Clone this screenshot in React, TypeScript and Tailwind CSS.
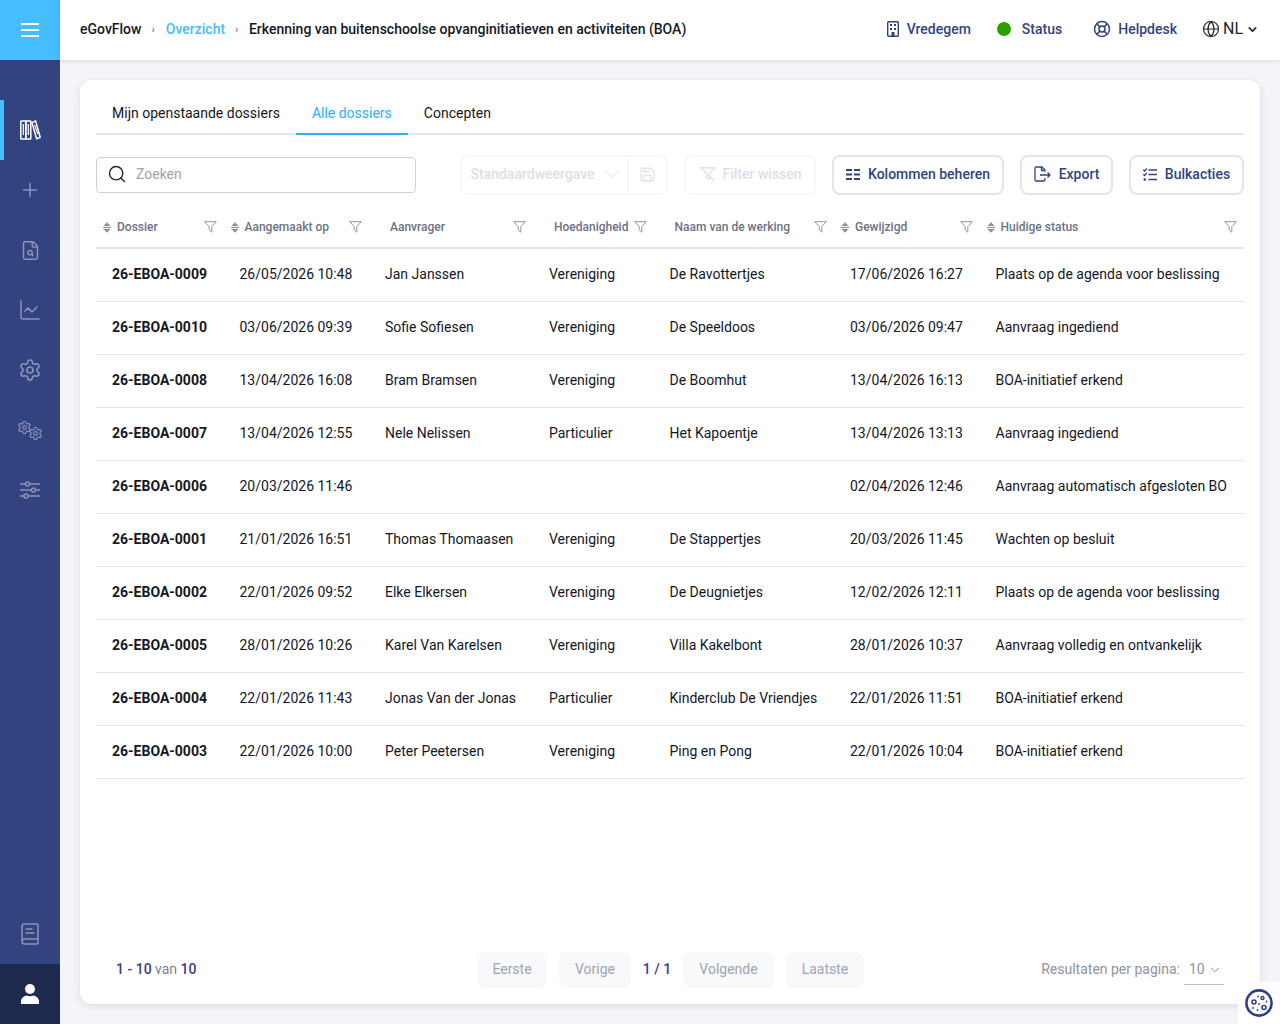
import {
  BookText,
  ChartLine,
  ChevronDown,
  FileSearch,
  Globe,
  LifeBuoy,
  Plus,
  Save,
  Search,
  Settings,
} from "lucide-react";

const rows = [
  ["26-EBOA-0009", "26/05/2026 10:48", "Jan Janssen", "Vereniging", "De Ravottertjes", "17/06/2026 16:27", "Plaats op de agenda voor beslissing"],
  ["26-EBOA-0010", "03/06/2026 09:39", "Sofie Sofiesen", "Vereniging", "De Speeldoos", "03/06/2026 09:47", "Aanvraag ingediend"],
  ["26-EBOA-0008", "13/04/2026 16:08", "Bram Bramsen", "Vereniging", "De Boomhut", "13/04/2026 16:13", "BOA-initiatief erkend"],
  ["26-EBOA-0007", "13/04/2026 12:55", "Nele Nelissen", "Particulier", "Het Kapoentje", "13/04/2026 13:13", "Aanvraag ingediend"],
  ["26-EBOA-0006", "20/03/2026 11:46", "", "", "", "02/04/2026 12:46", "Aanvraag automatisch afgesloten BO"],
  ["26-EBOA-0001", "21/01/2026 16:51", "Thomas Thomaasen", "Vereniging", "De Stappertjes", "20/03/2026 11:45", "Wachten op besluit"],
  ["26-EBOA-0002", "22/01/2026 09:52", "Elke Elkersen", "Vereniging", "De Deugnietjes", "12/02/2026 12:11", "Plaats op de agenda voor beslissing"],
  ["26-EBOA-0005", "28/01/2026 10:26", "Karel Van Karelsen", "Vereniging", "Villa Kakelbont", "28/01/2026 10:37", "Aanvraag volledig en ontvankelijk"],
  ["26-EBOA-0004", "22/01/2026 11:43", "Jonas Van der Jonas", "Particulier", "Kinderclub De Vriendjes", "22/01/2026 11:51", "BOA-initiatief erkend"],
  ["26-EBOA-0003", "22/01/2026 10:00", "Peter Peetersen", "Vereniging", "Ping en Pong", "22/01/2026 10:04", "BOA-initiatief erkend"],
];

const columns = [
  { label: "Dossier", sort: true, width: "w-[127.5px]" },
  { label: "Aangemaakt op", sort: true, width: "w-[145.5px]" },
  { label: "Aanvrager", sort: false, width: "w-[164px]" },
  { label: "Hoedanigheid", sort: false, width: "w-[120.5px]" },
  { label: "Naam van de werking", sort: false, width: "w-[180.5px]" },
  { label: "Gewijzigd", sort: true, width: "w-[145.5px]" },
  { label: "Huidige status", sort: true, width: "" },
];

function SortIcon() {
  return (
    <svg width="8" height="11" viewBox="0 0 8 11" className="shrink-0 text-[#8a8f9b]" fill="currentColor">
      <path d="M4 0.3 7.6 4H0.4Z" />
      <rect x="0" y="5" width="8" height="1" />
      <path d="M4 10.7 7.6 7H0.4Z" />
    </svg>
  );
}

function FunnelIcon() {
  return (
    <svg width="13" height="12" viewBox="0 0 13 12" fill="none" stroke="#8f94a0" strokeWidth="1" className="shrink-0">
      <path d="M0.7 0.7H12.3L7.8 5.6V11.2L5.2 8.8V5.6Z" strokeLinejoin="round" />
    </svg>
  );
}

function BooksIcon() {
  return (
    <svg width="21" height="20" viewBox="0 0 21 20" fill="none" stroke="white" strokeWidth="1.5" strokeLinejoin="round">
      <rect x="0.8" y="1" width="5" height="18" rx="0.6" />
      <rect x="5.8" y="1" width="5" height="18" rx="0.6" />
      <path d="M3.3 4V15M8.3 4V15" strokeWidth="1.2" />
      <path d="M12 2.6 15.6 0.9 20.2 17.2 16.6 18.9Z" />
      <path d="M14.6 5 17.8 14" strokeWidth="1.1" />
    </svg>
  );
}

function SlidersIcon() {
  return (
    <svg width="20" height="18" viewBox="0 0 20 18" fill="none" stroke="currentColor" strokeWidth="1.5">
      <path d="M0 3H5.5M9.5 3H20M0 9H11.5M15.5 9H20M0 15H4M8 15H20" />
      <circle cx="7.5" cy="3" r="2" />
      <circle cx="13.5" cy="9" r="2" />
      <circle cx="6" cy="15" r="2" />
    </svg>
  );
}

function UserIcon() {
  return (
    <svg width="18" height="20" viewBox="0 0 18 20" fill="white">
      <circle cx="9" cy="5" r="5" />
      <path d="M0 20V17.5C0 14 3 11.8 5.5 11.4 7.5 12.4 10.5 12.4 12.5 11.4 15 11.8 18 14 18 17.5V20Z" />
    </svg>
  );
}

function BuildingIcon() {
  return (
    <svg width="12" height="16" viewBox="0 0 12 16" fill="none" stroke="#33437f" strokeWidth="1.4" className="mr-[8px]">
      <rect x="0.7" y="0.7" width="10.6" height="14.6" rx="1" />
      <g fill="#33437f" stroke="none">
        <rect x="3" y="3" width="2" height="2" />
        <rect x="7" y="3" width="2" height="2" />
        <rect x="3" y="7" width="2" height="2" />
        <rect x="7" y="7" width="2" height="2" />
        <rect x="4.5" y="11" width="3" height="4.5" />
      </g>
    </svg>
  );
}

function ChevronThin() {
  return (
    <svg width="15" height="8" viewBox="0 0 15 8" fill="none" stroke="currentColor" strokeWidth="1">
      <path d="M0.5 0.5 7.5 7 14.5 0.5" />
    </svg>
  );
}

function FilterClearIcon() {
  return (
    <svg width="18" height="14" viewBox="0 0 18 14" fill="none" stroke="currentColor" strokeWidth="1.2" strokeLinejoin="round">
      <path d="M0.8 0.8H17.2L11.5 6.5V12.5L8 10V8" />
      <path d="M3 0.8 8 6M5 3 16 13.5" />
    </svg>
  );
}

function ColumnsIcon() {
  return (
    <svg width="14" height="13" viewBox="0 0 14 13" fill="none" stroke="#33437f" strokeWidth="2">
      <path d="M0 2H6M0 6.5H6M0 11H6M8 2H14M8 6.5H14M8 11H14" />
    </svg>
  );
}

function ExportIcon() {
  return (
    <svg width="17" height="16" viewBox="0 0 17 16" fill="none" stroke="#33437f" strokeWidth="1.3" strokeLinejoin="round">
      <path d="M11 5.5V4L8 1H2.2C1.5 1 1 1.5 1 2.2V13.8C1 14.5 1.5 15 2.2 15H9.8C10.5 15 11 14.5 11 13.8V12" />
      <path d="M7.5 1V4.5H11" />
      <path d="M6 9H16M13.5 6.5 16 9 13.5 11.5" />
    </svg>
  );
}

function BulkIcon() {
  return (
    <svg width="14" height="13" viewBox="0 0 14 13" fill="none" stroke="#33437f" strokeWidth="1.3">
      <path d="M0.3 1.8 1.6 3 3.8 0.5M0.3 6.3 1.6 7.5 3.8 5" />
      <circle cx="1.8" cy="11.5" r="0.7" fill="#33437f" />
      <path d="M5.5 2H14M5.5 6.5H14M5.5 11.5H14" strokeWidth="1.5" />
    </svg>
  );
}

function CookieIcon() {
  return (
    <svg width="28" height="28" viewBox="0 0 28 28" fill="none" stroke="#2d3f86">
      <circle cx="14" cy="14" r="12.6" strokeWidth="2.6" />
      <circle cx="9" cy="13" r="2" strokeWidth="1.6" />
      <circle cx="17.5" cy="9" r="1.5" strokeWidth="1.4" />
      <circle cx="19" cy="18.5" r="2" strokeWidth="1.6" />
      <g fill="#2d3f86" stroke="none">
        <circle cx="13" cy="7.5" r="0.9" />
        <circle cx="14" cy="15" r="0.9" />
        <circle cx="8" cy="19" r="0.9" />
        <circle cx="12.5" cy="21" r="0.9" />
        <circle cx="21.5" cy="12.5" r="0.9" />
      </g>
    </svg>
  );
}

function SidebarItem({ children }: { children: React.ReactNode }) {
  return <div className="h-[60px] flex items-center justify-center text-[#8b95b9]">{children}</div>;
}

export default function App() {
  return (
    <div className="flex h-[1024px] overflow-hidden bg-[#f3f5f9] text-sm leading-[21px] text-[#14171f] font-['Roboto',sans-serif] relative">
      <aside className="w-[60px] shrink-0 bg-[#33437f] flex flex-col">
        <div className="h-[60px] bg-[#46bdff] flex flex-col items-center justify-center gap-[4px]">
          <span className="block w-[18px] h-[2px] bg-white" />
          <span className="block w-[18px] h-[2px] bg-white" />
          <span className="block w-[18px] h-[2px] bg-white" />
        </div>
        <div className="mt-10 flex flex-col">
          <div className="h-[60px] flex items-center justify-center border-l-4 border-[#46bdff] pr-1">
            <BooksIcon />
          </div>
          <SidebarItem><Plus size={22} strokeWidth={1.6} /></SidebarItem>
          <SidebarItem><FileSearch size={21} strokeWidth={1.7} /></SidebarItem>
          <SidebarItem><ChartLine size={24} strokeWidth={1.5} /></SidebarItem>
          <SidebarItem><Settings size={24} strokeWidth={1.6} /></SidebarItem>
          <SidebarItem>
            <div className="relative w-[26px] h-[21px] -ml-[1px]">
              <Settings size={15} strokeWidth={1.8} className="absolute left-0 top-0" />
              <Settings size={15} strokeWidth={1.8} className="absolute right-0 bottom-0" />
            </div>
          </SidebarItem>
          <SidebarItem><SlidersIcon /></SidebarItem>
        </div>
        <div className="mt-auto">
          <SidebarItem><BookText size={24} strokeWidth={1.5} /></SidebarItem>
          <div className="h-[60px] bg-[#1f2a4f] flex items-center justify-center">
            <UserIcon />
          </div>
        </div>
      </aside>

      <div className="flex-1 min-w-0 flex flex-col">
        <header className="h-[60px] shrink-0 bg-white shadow-[0_1px_4px_rgba(30,40,70,0.14)] pl-5 pr-[21px] pb-[2px] flex items-center justify-between font-medium">
          <div className="flex items-center">
            <span>eGovFlow</span>
            <span className="ml-[10px] mr-[11px] text-[11px] text-[#6b7280]">›</span>
            <span className="text-[#46bdff]">Overzicht</span>
            <span className="ml-[10px] mr-[10.5px] text-[11px] text-[#6b7280]">›</span>
            <span>Erkenning van buitenschoolse opvanginitiatieven en activiteiten (BOA)</span>
          </div>
          <div className="flex items-center text-[#33437f]">
            <BuildingIcon />
            <span>Vredegem</span>
            <span className="ml-[26px] mr-[11px] w-[14px] h-[14px] rounded-full bg-[#2ca002]" />
            <span>Status</span>
            <LifeBuoy size={18} strokeWidth={2} className="ml-[31px] mr-[7px]" />
            <span>Helpdesk</span>
            <Globe size={18} strokeWidth={1.6} className="ml-[25px] mr-[3px] text-[#22252c]" />
            <span className="text-base font-normal text-[#22252c]">NL</span>
            <ChevronDown size={13} strokeWidth={3} className="ml-[3px] text-[#22252c]" />
          </div>
        </header>

        <main className="flex-1 min-h-0 pt-5 pl-5 pr-5 pb-5">
          <div className="h-full bg-white rounded-xl shadow-[0_2px_8px_rgba(30,40,70,0.12)] px-4 pt-[12px] flex flex-col">
            <nav className="flex h-[43px] border-b-2 border-[#e4e5ec]">
              <div className="px-4 h-[43px] pt-[1px] flex items-center border-b-2 border-transparent">Mijn openstaande dossiers</div>
              <div className="px-4 h-[43px] pt-[1px] flex items-center text-[#2cb0f7] border-b-2 border-[#2cb0f7]">Alle dossiers</div>
              <div className="px-4 h-[43px] pt-[1px] flex items-center border-b-2 border-transparent">Concepten</div>
            </nav>

            <div className="mt-[20px] flex items-center h-10">
              <div className="w-[320px] h-9 border border-[#cdd0d8] rounded flex items-center pl-[10px] pb-[2px]">
                <Search size={20} strokeWidth={1.7} className="text-[#22252c]" />
                <span className="ml-[9px] text-[#9ea3ad]">Zoeken</span>
              </div>
              <div className="ml-[44px] w-[208px] h-10 border-2 border-[#f7f7fa] rounded-lg flex items-center text-[#dcdeea] font-medium pb-[2px]">
                <span className="pl-[8.5px]">Standaardweergave</span>
                <span className="ml-[9px]"><ChevronThin /></span>
                <span className="ml-[8px] h-9 border-l border-[#f4f4f7]" />
                <Save size={17} strokeWidth={1.6} className="ml-[11px]" />
              </div>
              <div className="ml-[16px] w-[132px] h-10 border-2 border-[#f7f7fa] rounded-lg flex items-center justify-center gap-[6px] text-[#dcdeea] font-medium pb-[2px]">
                <FilterClearIcon />
                <span>Filter wissen</span>
              </div>
              <div className="ml-[16px] w-[172px] h-10 border-2 border-[#e4e5ec] rounded-lg flex items-center justify-center gap-[8px] text-[#33437f] font-medium pb-[2px]">
                <ColumnsIcon />
                <span>Kolommen beheren</span>
              </div>
              <div className="ml-[16px] w-[93px] h-10 border-2 border-[#e4e5ec] rounded-lg flex items-center justify-center gap-[8px] text-[#33437f] font-medium pb-[2px]">
                <ExportIcon />
                <span>Export</span>
              </div>
              <div className="ml-[16px] w-[115px] h-10 border-2 border-[#e4e5ec] rounded-lg flex items-center justify-center gap-[8px] text-[#33437f] font-medium pb-[2px]">
                <BulkIcon />
                <span>Bulkacties</span>
              </div>
            </div>

            <table className="mt-[12px] w-full table-fixed border-collapse">
              <thead>
                <tr className="h-[41px] border-b-2 border-[#e4e5ec]">
                  {columns.map((col) => (
                    <th key={col.label} className={`${col.width} p-0 font-medium text-xs text-[#6d7280] text-left`}>
                      <div className="flex items-center justify-between pl-[7px] pr-[7px]">
                        <span className="flex items-center gap-[6px]">
                          {col.sort ? <SortIcon /> : <span className="w-[8px]" />}
                          {col.label}
                        </span>
                        <FunnelIcon />
                      </div>
                    </th>
                  ))}
                </tr>
              </thead>
              <tbody>
                {rows.map((row) => (
                  <tr key={row[0]} className="h-[53px] border-b border-[#e4e5ec]">
                    {row.map((cell, i) => (
                      <td key={i} className={`px-4 p-0 overflow-hidden whitespace-nowrap ${i === 0 ? "font-bold" : ""}`}>
                        {cell}
                      </td>
                    ))}
                  </tr>
                ))}
              </tbody>
            </table>

            <div className="mt-auto mb-4 h-9 flex items-center relative">
              <div className="pl-5 pb-[2px] w-[381px] font-medium text-[#33437f]">
                1 - 10 <span className="font-normal text-[#7d828c]">van</span> 10
              </div>
              <div className="flex items-center text-[#a0a4b4]">
                <span className="w-[70px] h-9 pb-[2px] rounded-lg bg-[#f8f9fb] flex items-center justify-center">Eerste</span>
                <span className="ml-3 w-[72px] h-9 pb-[2px] rounded-lg bg-[#f8f9fb] flex items-center justify-center">Vorige</span>
                <span className="w-[52px] pb-[2px] text-center font-medium text-[#33437f]">1 / 1</span>
                <span className="w-[91px] h-9 pb-[2px] rounded-lg bg-[#f8f9fb] flex items-center justify-center">Volgende</span>
                <span className="ml-3 w-[78px] h-9 pb-[2px] rounded-lg bg-[#f8f9fb] flex items-center justify-center">Laatste</span>
              </div>
              <div className="ml-auto mr-[20px] h-9 flex items-start text-[#8f939c]">
                <span className="h-9 flex items-center pb-[2px]">Resultaten per pagina:</span>
                <span className="ml-1 w-10 h-[33px] pt-[3px] border-b border-[#bbbdc2] flex items-center pl-[5px] gap-[3px]">
                  10 <ChevronDown size={14} strokeWidth={1.4} className="text-[#6b6f78]" />
                </span>
              </div>
            </div>
          </div>
        </main>
      </div>

      <div className="absolute right-0 bottom-0 w-[42px] h-[42px] bg-white rounded-tl-[21px] flex items-center justify-center">
        <CookieIcon />
      </div>
    </div>
  );
}
